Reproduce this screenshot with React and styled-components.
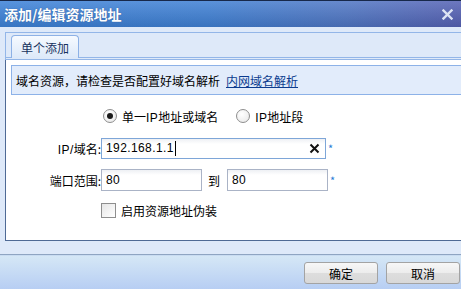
import React from "react";
import styled, { createGlobalStyle } from "styled-components";

const Global = createGlobalStyle`
  html, body { margin: 0; padding: 0; }
  body { font-family: "Noto Sans CJK SC", "Liberation Sans", sans-serif; font-size: 12px; color: #000; }
`;

const Window = styled.div`
  width: 461px;
  height: 289px;
  background: #dee9f9;
  display: flex;
  flex-direction: column;
  overflow: hidden;
`;

const TitleBar = styled.div`
  height: 26px;
  border-top: 1px solid #17284a;
  background:
    linear-gradient(to bottom, rgba(255,255,255,0.14), rgba(0,0,0,0.1)),
    linear-gradient(to right, #3d82d8 0%, #3f80d4 45%, #4f76c4 75%, #5561b4 100%);
  display: flex;
  align-items: center;
  justify-content: space-between;
  padding: 0 8px 0 4px;
  flex-shrink: 0;
`;

const Title = styled.div`
  color: #fff;
  font-weight: bold;
  font-size: 14px;
  line-height: 1;
  text-shadow: 0 0 1px rgba(20,40,90,0.5);
`;

const CloseIcon = styled.svg`
  width: 11px;
  height: 11px;
`;

const Body = styled.div`
  display: flex;
  flex-direction: column;
  padding: 5px 0 0 5px;
`;

const TabFrame = styled.div`
  height: 208px;
  display: flex;
  flex-direction: column;
  border-top: 1px solid #93b6e8;
`;

const TabStrip = styled.div`
  height: 24px;
  display: flex;
  align-items: flex-end;
  padding-left: 5px;
  border-left: 1px solid #93b6e8;
  border-bottom: 1px solid #93b6e8;
`;

const Tab = styled.div`
  height: 22px;
  width: 66px;
  margin-bottom: -1px;
  border: 1px solid #8db1e6;
  border-bottom: none;
  border-radius: 4px 4px 0 0;
  background: linear-gradient(to bottom, #f6faff, #dde9f9);
  color: #17325e;
  display: flex;
  align-items: center;
  justify-content: center;
  font-size: 12px;
`;

const Gap = styled.div`
  height: 1px;
  border-left: 1px solid #93b6e8;
  border-bottom: 1px solid #93b6e8;
`;

const Panel = styled.div`
  flex: 1;
  background: #fff;
  border-left: 1px solid #4f6a95;
  border-bottom: 1px solid #4f6a95;
  padding: 5px 0 0 5px;
  display: flex;
  flex-direction: column;
`;

const InfoBox = styled.div`
  height: 28px;
  width: 446px;
  border: 1px solid #8db2e8;
  background: #e2ecfb;
  display: flex;
  align-items: center;
  padding-left: 4px;
  font-size: 12px;
`;

const Link = styled.a`
  color: #0c3c8f;
  text-decoration: underline;
  margin-left: 6px;
`;

const Latin = styled.span`
  font-family: "Liberation Sans", Arial, sans-serif;
  font-size: 12px;
  letter-spacing: 0.4px;
`;

const RadioRow = styled.div`
  display: flex;
  align-items: center;
  height: 14px;
  margin-top: 14px;
  padding-left: 92px;
`;

const RadioItem = styled.label`
  display: flex;
  align-items: center;
  gap: 5px;
  margin-right: ${(p) => p.$mr || 0}px;
`;

const RadioCircle = styled.span`
  width: 12px;
  height: 12px;
  border-radius: 50%;
  border: 1px solid #8e8e8e;
  background: radial-gradient(circle at 40% 35%, #ffffff, #e6e6e6);
  display: flex;
  align-items: center;
  justify-content: center;
  &::after {
    content: "";
    width: 6px;
    height: 6px;
    border-radius: 50%;
    background: #1a1a1a;
    display: ${(p) => (p.$on ? "block" : "none")};
  }
`;

const FormRow = styled.div`
  display: flex;
  align-items: center;
  height: 22px;
  margin-top: ${(p) => p.$mt}px;
`;

const Label = styled.div`
  width: 90px;
  text-align: right;
  flex-shrink: 0;
`;

const InputBox = styled.div`
  width: ${(p) => p.$w}px;
  height: ${(p) => p.$h || 20}px;
  border: 1px solid ${(p) => (p.$focus ? "#7ea6d8" : "#aab3c6")};
  background: linear-gradient(to bottom, #eef0f4 0px, #ffffff 5px);
  display: flex;
  align-items: center;
  padding: 0 5px 0 4px;
  box-sizing: border-box;
`;

const Value = styled.span`
  flex: 1;
  display: flex;
  align-items: center;
  font-family: "Liberation Sans", Arial, sans-serif;
  font-size: 12px;
  letter-spacing: 0.4px;
`;

const Caret = styled.span`
  display: inline-block;
  width: 1px;
  height: 15px;
  background: #000;
  margin-left: 1px;
`;

const Star = styled.span`
  color: #2a7bd6;
  font-size: 11px;
  margin-left: 2px;
  align-self: flex-start;
  margin-top: 3px;
`;

const To = styled.span`
  margin: 0 7px 0 6px;
`;

const CheckRow = styled.div`
  display: flex;
  align-items: center;
  margin-top: 11px;
  padding-left: 90px;
  gap: 5px;
`;

const CheckBox = styled.span`
  width: 13px;
  height: 13px;
  border: 1px solid #8e8e8e;
  background: linear-gradient(135deg, #e6e6e6, #ffffff);
`;

const Spacer = styled.div`
  height: 13px;
  flex-shrink: 0;
`;

const ButtonBar = styled.div`
  flex: 1;
  border-top: 1px solid #8fa5c2;
  box-shadow: inset 0 1px 0 #c9dcf2;
  background: linear-gradient(to bottom, #d6e8f6, #b7cef3);
  display: flex;
  justify-content: flex-end;
  align-items: flex-start;
  padding: 7px 1px 0 0;
  gap: 8px;
`;

const Button = styled.button`
  width: 74px;
  height: 22px;
  border: 1px solid #a3a3a3;
  border-radius: 3px;
  background: linear-gradient(to bottom, #f7f7f7 0%, #ececec 50%, #dddddd 51%, #d8d8d8 100%);
  font-family: "Noto Sans CJK SC", sans-serif;
  font-size: 12px;
  color: #000;
  padding: 0;
`;

export default function App() {
  return (
    <>
      <Global />
      <Window>
        <TitleBar>
          <Title>添加/编辑资源地址</Title>
          <CloseIcon viewBox="0 0 11 11">
            <path d="M1.5 1.5 L9.5 9.5 M9.5 1.5 L1.5 9.5" stroke="#dde4f4" strokeWidth="2.4" strokeLinecap="square" />
          </CloseIcon>
        </TitleBar>
        <Body>
          <TabFrame>
            <TabStrip>
              <Tab>单个添加</Tab>
            </TabStrip>
            <Gap />
            <Panel>
              <InfoBox>
                域名资源，请检查是否配置好域名解析
                <Link>内网域名解析</Link>
              </InfoBox>
              <RadioRow>
                <RadioItem $mr={18}>
                  <RadioCircle $on />
                  <span>单一<Latin>IP</Latin>地址或域名</span>
                </RadioItem>
                <RadioItem>
                  <RadioCircle />
                  <span><Latin>IP</Latin>地址段</span>
                </RadioItem>
              </RadioRow>
              <FormRow $mt={14}>
                <Label><Latin>IP/</Latin>域名:</Label>
                <InputBox $w={225} $h={21} $focus>
                  <Value>
                    192.168.1.1
                    <Caret />
                  </Value>
                  <svg width="11" height="11" viewBox="0 0 11 11">
                    <path d="M1.5 1.5 L9.5 9.5 M9.5 1.5 L1.5 9.5" stroke="#111" strokeWidth="2" />
                  </svg>
                </InputBox>
                <Star>*</Star>
              </FormRow>
              <FormRow $mt={10}>
                <Label>端口范围:</Label>
                <InputBox $w={101} $h={22}>
                  <Value>80</Value>
                </InputBox>
                <To>到</To>
                <InputBox $w={101} $h={22}>
                  <Value>80</Value>
                </InputBox>
                <Star>*</Star>
              </FormRow>
              <CheckRow>
                <CheckBox />
                启用资源地址伪装
              </CheckRow>
            </Panel>
          </TabFrame>
        </Body>
        <Spacer />
        <ButtonBar>
          <Button>确定</Button>
          <Button>取消</Button>
        </ButtonBar>
      </Window>
    </>
  );
}
